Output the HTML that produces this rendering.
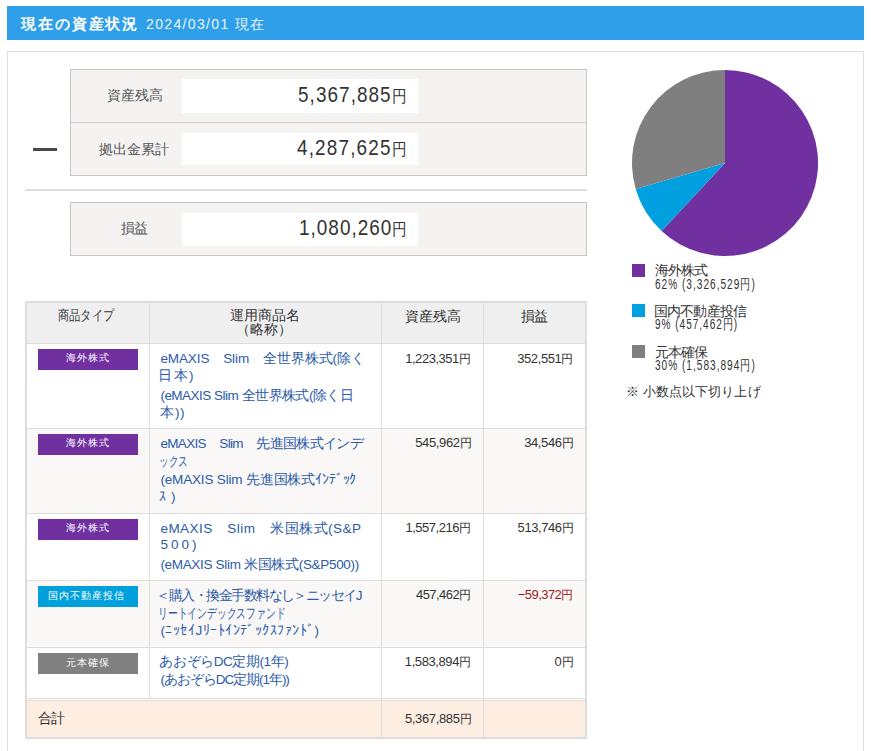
<!DOCTYPE html>
<html lang="ja">
<head>
<meta charset="utf-8">
<style>
*{box-sizing:border-box;margin:0;padding:0}
html,body{width:871px;height:751px;overflow:hidden;background:#fff}
body{position:relative;font-family:"Liberation Sans",sans-serif;color:#333}
.abs{position:absolute}
#hdr{left:7px;top:6px;width:857px;height:34px;background:#2e9fe8}
#panel{left:7px;top:51px;width:857px;height:760px;border:1px solid #ddd;border-bottom:none}
.box{position:absolute;left:70px;width:517px;background:#f4f3f2;border:1px solid #c8c8c8}
.wb{left:182px;width:236px;background:#fff}
#minus{left:33px;top:148px;width:24px;height:3px;background:#4a4a4a}
#sep{left:25px;top:189px;width:562px;height:2px;background:#ddd}
#pie{left:631px;top:69px}
.sq{left:632px;width:13px;height:13px}
#tbl{left:25px;top:301px;width:562px;height:438px;border:2px solid #ddd}
.hline{position:absolute;height:1px;background:#ddd}
.vline{position:absolute;width:1px;background:#ddd}
.badge{position:absolute;left:38px;width:100px;height:21px}
.tx{position:absolute;white-space:nowrap;line-height:1;font-family:"Liberation Sans",sans-serif}
.bn{font-size:22px}
.by{font-size:16.5px}
.sy{font-size:12px}
</style>
</head>
<body>

<div id="hdr" class="abs"></div>
<div id="panel" class="abs"></div>
<div class="box" style="top:69px;height:107px"></div>
<div class="abs" style="left:71px;top:122px;width:515px;height:1px;background:#cfcfcf"></div>
<div class="abs wb" style="top:79px;height:34px"></div>
<div class="abs wb" style="top:133px;height:32px"></div>
<div id="minus" class="abs"></div>
<div id="sep" class="abs"></div>
<div class="box" style="top:202px;height:54px"></div>
<div class="abs wb" style="top:213px;height:33px"></div>
<svg id="pie" class="abs" width="188" height="188" viewBox="0 0 188 188">
  <path d="M94 94 L94 1 A93 93 0 1 1 30.6 162 Z" fill="#7030a0"/>
  <path d="M94 94 L30.6 162 A93 93 0 0 1 4.7 120 Z" fill="#00a0e0"/>
  <path d="M94 94 L4.7 120 A93 93 0 0 1 94 1 Z" fill="#7f7f7f"/>
</svg>
<div class="abs sq" style="top:264px;background:#7030a0"></div>
<div class="abs sq" style="top:304px;background:#00a0e0"></div>
<div class="abs sq" style="top:345px;background:#7f7f7f"></div>
<div id="tbl" class="abs"></div>
<div class="abs" style="left:27px;top:303px;width:558px;height:40px;background:#efefef"></div>
<div class="abs" style="left:27px;top:429px;width:558px;height:84px;background:#f9f8f7"></div>
<div class="abs" style="left:27px;top:581px;width:558px;height:66px;background:#f9f8f7"></div>
<div class="abs" style="left:27px;top:701px;width:558px;height:36px;background:#fdeee1"></div>
<div class="hline" style="left:27px;top:343px;width:558px"></div>
<div class="hline" style="left:27px;top:428px;width:558px"></div>
<div class="hline" style="left:27px;top:513px;width:558px"></div>
<div class="hline" style="left:27px;top:580px;width:558px"></div>
<div class="hline" style="left:27px;top:647px;width:558px"></div>
<div class="hline" style="left:27px;top:698px;width:558px"></div>
<div class="hline" style="left:27px;top:700px;width:558px"></div>
<div class="vline" style="left:149px;top:303px;height:395px"></div>
<div class="vline" style="left:381px;top:303px;height:434px"></div>
<div class="vline" style="left:483px;top:303px;height:434px"></div>
<div class="badge" style="top:349px;background:#7030a0"></div>
<div class="badge" style="top:434px;background:#7030a0"></div>
<div class="badge" style="top:519px;background:#7030a0"></div>
<div class="badge" style="top:586px;background:#00a0dc"></div>
<div class="badge" style="top:653px;background:#808080"></div>

<div class="tx" id="ttl" style="left:21.00px;top:15.60px;letter-spacing:1.88px;font-size:15px;font-weight:bold;color:#fff">現在の資産状況</div>
<div class="tx" id="date" style="left:146.00px;top:17.00px;letter-spacing:1.35px;font-size:14px;color:#eaf5fd">2024/03/01 現在</div>
<div class="tx" id="l1" style="left:107.00px;top:88.00px;letter-spacing:0.00px;font-size:14px;color:#555">資産残高</div>
<div class="tx" id="l2" style="left:99.40px;top:141.80px;letter-spacing:-0.09px;font-size:14px;color:#555">拠出金累計</div>
<div class="tx" id="l3" style="left:121.00px;top:221.00px;letter-spacing:-0.90px;font-size:14px;color:#555">損益</div>
<div class="tx" id="v1" style="left:298.00px;top:84.00px;letter-spacing:1.23px;transform:scaleX(0.8600);transform-origin:0 0;color:#333"><span class="bn">5,367,885</span><span class="by">円</span></div>
<div class="tx" id="v2" style="left:297.40px;top:137.40px;letter-spacing:1.36px;transform:scaleX(0.8600);transform-origin:0 0;color:#333"><span class="bn">4,287,625</span><span class="by">円</span></div>
<div class="tx" id="v3" style="left:298.80px;top:217.00px;letter-spacing:1.19px;transform:scaleX(0.8600);transform-origin:0 0;color:#333"><span class="bn">1,080,260</span><span class="by">円</span></div>
<div class="tx" id="lg1a" style="left:654.60px;top:264.00px;letter-spacing:-0.78px;font-size:13.5px;color:#333">海外株式</div>
<div class="tx" id="lg1b" style="left:655.20px;top:277.00px;letter-spacing:1.40px;transform:scaleX(0.7200);transform-origin:0 0;font-size:14px;font-family:"Liberation Mono",monospace;color:#333">62% (3,326,529円)</div>
<div class="tx" id="lg2a" style="left:653.60px;top:305.00px;letter-spacing:-0.72px;font-size:13.5px;color:#333">国内不動産投信</div>
<div class="tx" id="lg2b" style="left:655.20px;top:317.30px;letter-spacing:1.34px;transform:scaleX(0.7200);transform-origin:0 0;font-size:14px;font-family:"Liberation Mono",monospace;color:#333">9% (457,462円)</div>
<div class="tx" id="lg3a" style="left:654.60px;top:346.20px;letter-spacing:-0.78px;font-size:13.5px;color:#333">元本確保</div>
<div class="tx" id="lg3b" style="left:655.20px;top:357.70px;letter-spacing:1.40px;transform:scaleX(0.7200);transform-origin:0 0;font-size:14px;font-family:"Liberation Mono",monospace;color:#333">30% (1,583,894円)</div>
<div class="tx" id="note" style="left:626.00px;top:385.10px;letter-spacing:0.09px;font-size:13px;color:#333">※ 小数点以下切り上げ</div>
<div class="tx" id="th1" style="left:58.00px;top:308.00px;letter-spacing:0.00px;transform:scaleX(0.8028);transform-origin:0 0;font-size:14px;color:#333">商品タイプ</div>
<div class="tx" id="th2a" style="left:230.00px;top:308.00px;letter-spacing:0.12px;font-size:14px;color:#333">運用商品名</div>
<div class="tx" id="th2b" style="left:236.00px;top:322.00px;letter-spacing:0.00px;font-size:14px;color:#333">（略称）</div>
<div class="tx" id="th3" style="left:405.00px;top:308.50px;letter-spacing:0.00px;font-size:14px;color:#333">資産残高</div>
<div class="tx" id="th4" style="left:521.00px;top:308.50px;letter-spacing:-0.90px;font-size:14px;color:#333">損益</div>
<div class="tx" id="bg1" style="left:66.20px;top:353.20px;letter-spacing:0.84px;font-size:10px;color:#fff">海外株式</div>
<div class="tx" id="bg2" style="left:66.20px;top:438.20px;letter-spacing:0.84px;font-size:10px;color:#fff">海外株式</div>
<div class="tx" id="bg3" style="left:66.20px;top:523.20px;letter-spacing:0.84px;font-size:10px;color:#fff">海外株式</div>
<div class="tx" id="bg4" style="left:48.20px;top:591.30px;letter-spacing:0.96px;font-size:10px;color:#fff">国内不動産投信</div>
<div class="tx" id="bg5" style="left:66.20px;top:658.00px;letter-spacing:0.84px;font-size:10px;color:#fff">元本確保</div>
<div class="tx" id="nm0" style="left:160.40px;top:351.50px;letter-spacing:-0.10px;font-size:13.5px;color:#2b5ba8">eMAXIS　Slim　全世界株式(除く</div>
<div class="tx" id="nm1" style="left:158.40px;top:369.00px;letter-spacing:1.35px;font-size:13.5px;color:#2b5ba8">日本)</div>
<div class="tx" id="nm2" style="left:160.40px;top:388.50px;letter-spacing:-0.51px;font-size:13.5px;color:#2b5ba8">(eMAXIS Slim 全世界株式(除く日</div>
<div class="tx" id="nm3" style="left:160.40px;top:406.00px;letter-spacing:0.54px;font-size:13.5px;color:#2b5ba8">本))</div>
<div class="tx" id="nm4" style="left:160.40px;top:437.00px;letter-spacing:-0.66px;font-size:13.5px;color:#2b5ba8">eMAXIS　Slim　先進国株式インデ</div>
<div class="tx" id="nm5" style="left:159.40px;top:455.00px;letter-spacing:0.00px;transform:scaleX(0.6895);transform-origin:0 0;font-size:13.5px;color:#2b5ba8">ックス</div>
<div class="tx" id="nm6" style="left:160.40px;top:473.00px;letter-spacing:-0.17px;font-size:13.5px;color:#2b5ba8">(eMAXIS Slim 先進国株式ｲﾝﾃﾞｯｸ</div>
<div class="tx" id="nm7" style="left:159.40px;top:490.00px;letter-spacing:4.68px;font-size:13.5px;color:#2b5ba8">ｽ)</div>
<div class="tx" id="nm8" style="left:160.40px;top:522.40px;letter-spacing:0.49px;font-size:13.5px;color:#2b5ba8">eMAXIS　Slim　米国株式(S&amp;P</div>
<div class="tx" id="nm9" style="left:160.40px;top:537.80px;letter-spacing:3.06px;font-size:13.5px;color:#2b5ba8">500)</div>
<div class="tx" id="nm10" style="left:160.40px;top:558.00px;letter-spacing:-0.32px;font-size:13.5px;color:#2b5ba8">(eMAXIS Slim 米国株式(S&amp;P500))</div>
<div class="tx" id="nm11" style="left:156.40px;top:588.50px;letter-spacing:-1.54px;font-size:13.5px;color:#2b5ba8">＜購入・換金手数料なし＞ニッセイJ</div>
<div class="tx" id="nm12" style="left:158.40px;top:607.00px;letter-spacing:0.00px;transform:scaleX(0.7006);transform-origin:0 0;font-size:13.5px;color:#2b5ba8">リートインデックスファンド</div>
<div class="tx" id="nm13" style="left:160.40px;top:624.00px;letter-spacing:0.52px;font-size:13.5px;color:#2b5ba8">(ﾆｯｾｲJﾘｰﾄｲﾝﾃﾞｯｸｽﾌｧﾝﾄﾞ)</div>
<div class="tx" id="nm14" style="left:159.40px;top:654.50px;letter-spacing:-0.43px;font-size:13.5px;color:#2b5ba8">あおぞらDC定期(1年)</div>
<div class="tx" id="nm15" style="left:160.40px;top:673.00px;letter-spacing:-1.04px;font-size:13.5px;color:#2b5ba8">(あおぞらDC定期(1年))</div>
<div class="tx" id="n1a" style="left:405.20px;top:351.50px;letter-spacing:-0.46px;font-size:13px;color:#333">1,223,351<span class="sy">円</span></div>
<div class="tx" id="n1b" style="left:517.20px;top:351.50px;letter-spacing:-0.39px;font-size:13px;color:#333">352,551<span class="sy">円</span></div>
<div class="tx" id="n2a" style="left:415.20px;top:436.00px;letter-spacing:-0.35px;font-size:13px;color:#333">545,962<span class="sy">円</span></div>
<div class="tx" id="n2b" style="left:524.20px;top:436.00px;letter-spacing:-0.39px;font-size:13px;color:#333">34,546<span class="sy">円</span></div>
<div class="tx" id="n3a" style="left:405.40px;top:520.70px;letter-spacing:-0.46px;font-size:13px;color:#333">1,557,216<span class="sy">円</span></div>
<div class="tx" id="n3b" style="left:517.60px;top:520.70px;letter-spacing:-0.43px;font-size:13px;color:#333">513,746<span class="sy">円</span></div>
<div class="tx" id="n4a" style="left:416.00px;top:588.00px;letter-spacing:-0.56px;font-size:13px;color:#333">457,462<span class="sy">円</span></div>
<div class="tx" id="n4b" style="left:517.80px;top:588.00px;letter-spacing:-0.55px;font-size:13px;color:#a01818">−59,372<span class="sy">円</span></div>
<div class="tx" id="n5a" style="left:404.80px;top:655.00px;letter-spacing:-0.40px;font-size:13px;color:#333">1,583,894<span class="sy">円</span></div>
<div class="tx" id="n5b" style="left:554.60px;top:655.00px;letter-spacing:0.09px;font-size:13px;color:#333">0<span class="sy">円</span></div>
<div class="tx" id="tot" style="left:38.00px;top:711.00px;letter-spacing:-0.90px;font-size:14px;color:#333">合計</div>
<div class="tx" id="n6a" style="left:405.00px;top:712.00px;letter-spacing:-0.37px;font-size:13px;color:#333">5,367,885<span class="sy">円</span></div>
</body>
</html>
